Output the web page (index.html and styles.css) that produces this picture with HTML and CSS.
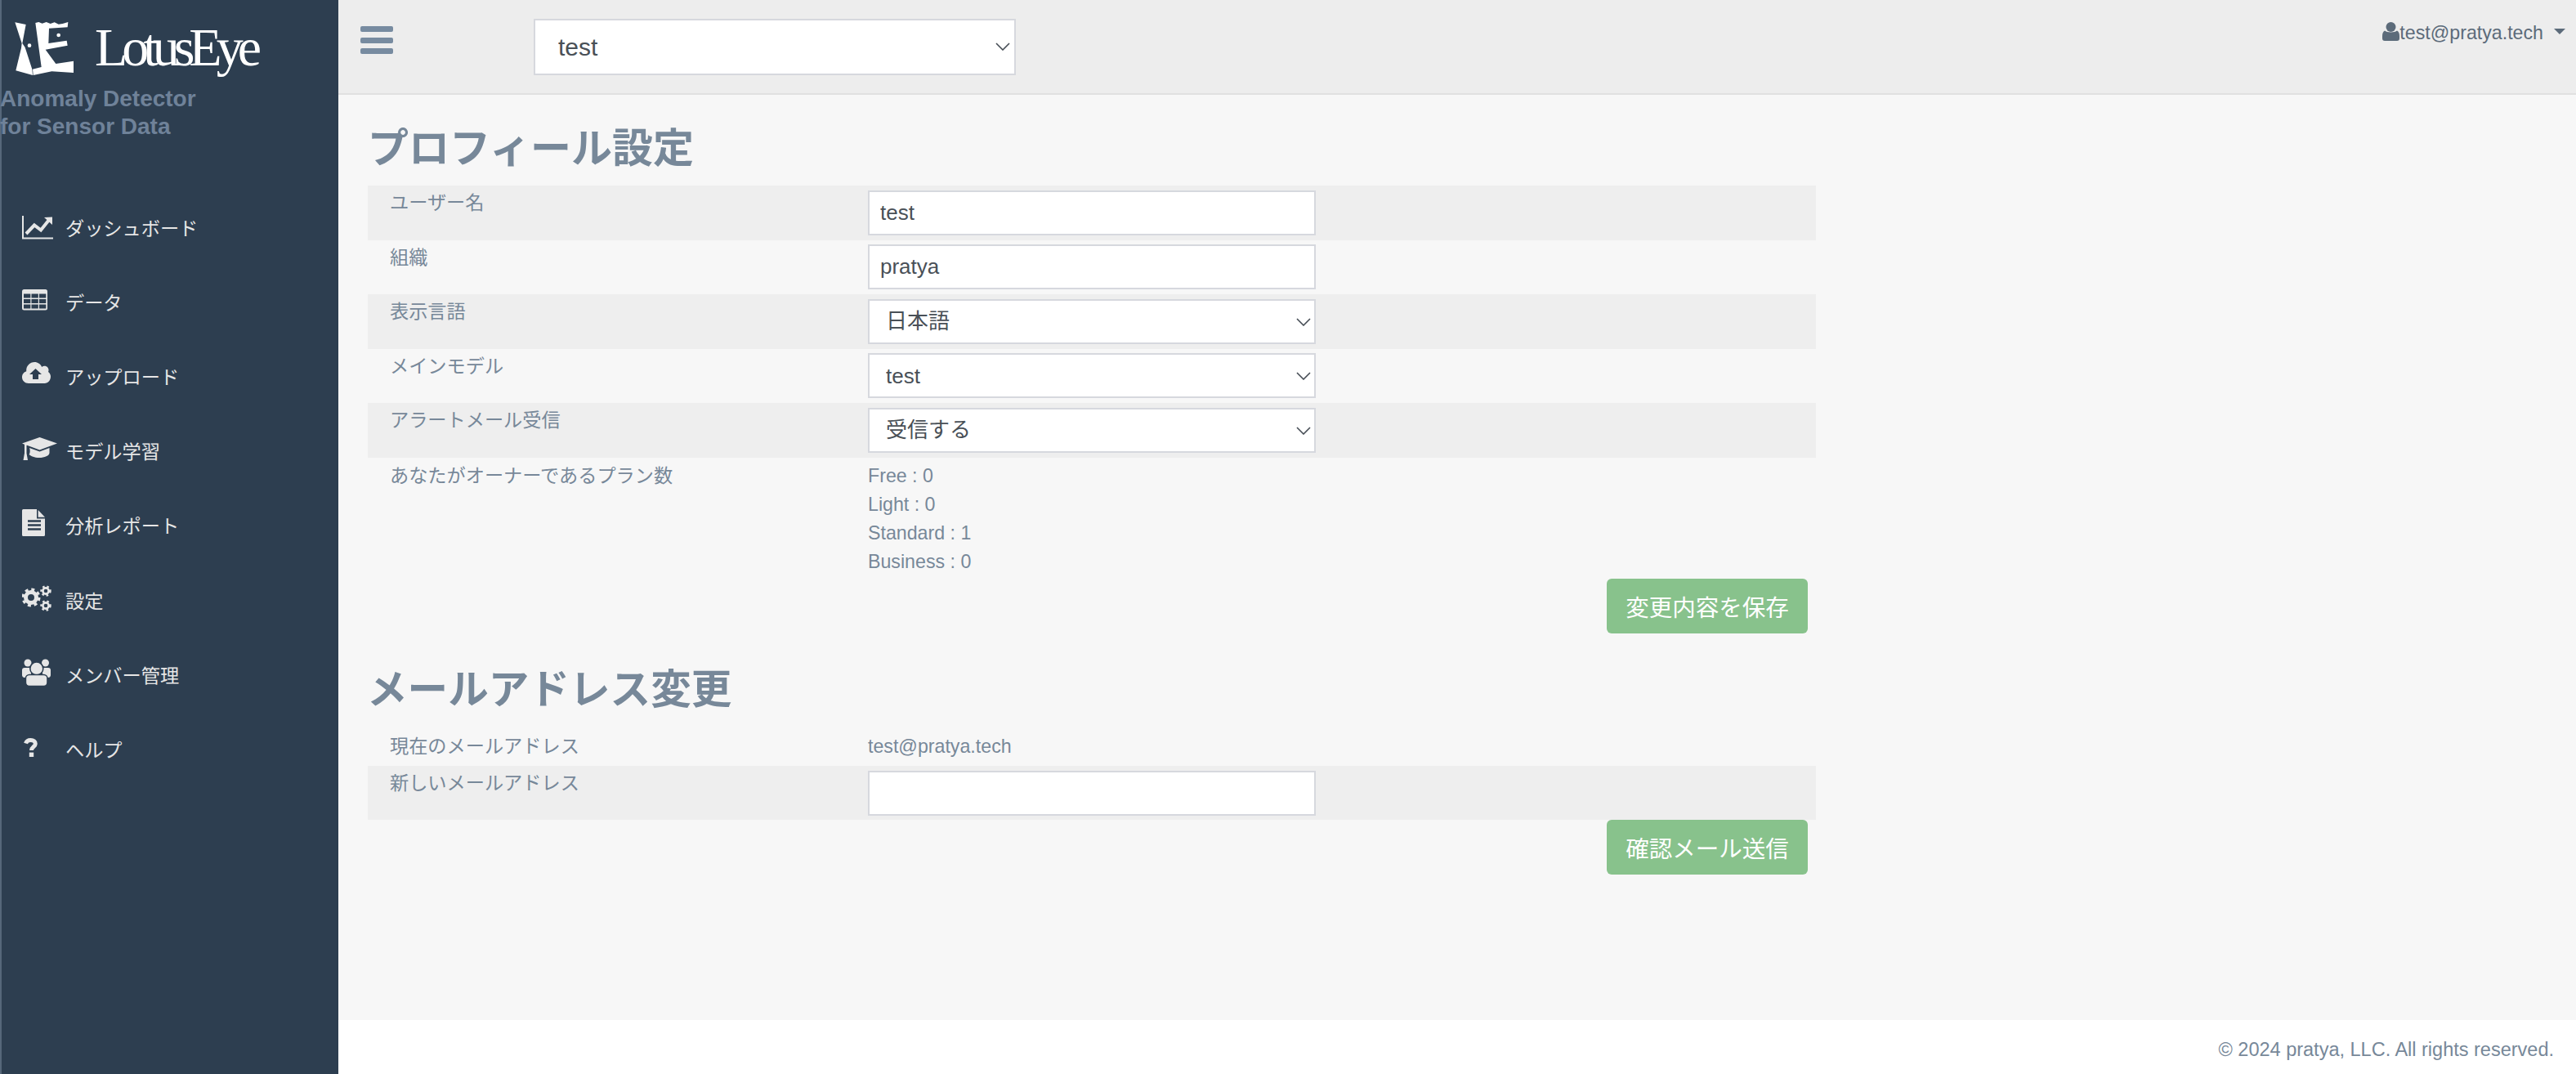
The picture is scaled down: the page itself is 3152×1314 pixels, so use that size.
FILE: index.html

```html
<!DOCTYPE html>
<html lang="ja">
<head>
  <meta charset="UTF-8" />
  <title>LotusEye</title>
  <link rel="stylesheet" href="styles.css">
</head>
<body>
  <aside class="sidebar">
    <div class="brand">
      <svg class="brand-mark" viewBox="0 0 270 240">
        <path fill="#fff" d="M25 28L65 36L52 105L62 120L88 200L90 222L28 205L48 122L50 105Z"/>
        <path fill="#fff" d="M100 30L112 27L125 32L140 27L155 33L170 28L185 35L200 33L220 27L218 46L150 50L148 105L215 95L218 113L137 128L175 180L240 170L240 213L160 208L92 222L90 200L122 192Z"/>
        <circle fill="#fff" cx="78" cy="113" r="7"/>
        <circle fill="#fff" cx="185" cy="75" r="7"/>
      </svg>
      <span class="brand-name">LotusEye</span>
    </div>
    <p class="tagline">Anomaly Detector<br>for Sensor Data</p>
    <nav class="nav">
      <a class="nav-item">
        <svg class="nav-icon" viewBox="0 0 44 40">
          <path d="M1 9V36.5H38" fill="none" stroke="#e6e6e6" stroke-width="2"/>
          <path d="M5 31L15 20.5L23 26.5L33 14" fill="none" stroke="#e6e6e6" stroke-width="4"/>
          <path d="M27 11L37 10.5V20Z" fill="#e6e6e6"/>
        </svg>
        ダッシュボード
      </a>
      <a class="nav-item">
        <svg class="nav-icon" viewBox="0 0 44 40">
          <rect y="8" width="31" height="25.5" rx="2.5" fill="#e6e6e6"/>
          <g fill="#2d3e50">
            <rect x="2" y="13.5" width="8.3" height="5"/><rect x="11.5" y="13.5" width="8.3" height="5"/><rect x="21" y="13.5" width="8.3" height="5"/>
            <rect x="2" y="20" width="8.3" height="5"/><rect x="11.5" y="20" width="8.3" height="5"/><rect x="21" y="20" width="8.3" height="5"/>
            <rect x="2" y="26.5" width="8.3" height="5"/><rect x="11.5" y="26.5" width="8.3" height="5"/><rect x="21" y="26.5" width="8.3" height="5"/>
          </g>
        </svg>
        データ
      </a>
      <a class="nav-item">
        <svg class="nav-icon" viewBox="0 0 44 40">
          <path fill="#e6e6e6" d="M8 32C3.5 32 0 28.6 0 24.5C0 21 2.2 18.2 5.3 17.3C5.2 16.8 5.2 16.3 5.2 16C5.2 10.5 9.7 6 15.2 6C19.2 6 22.7 8.4 24.2 11.9C25.1 11.1 26.2 10.7 27.5 10.7C30.3 10.7 32.5 12.9 32.5 15.7C32.5 16.5 32.3 17.2 32 17.9C33.8 19.1 35 21.2 35 23.5C35 28.3 32 32 27.5 32Z"/>
          <path fill="#2d3e50" d="M16.5 14L24 21H20V27H13V21H9Z"/>
        </svg>
        アップロード
      </a>
      <a class="nav-item">
        <svg class="nav-icon" viewBox="0 0 44 40">
          <path fill="#e6e6e6" d="M21.5 7L43 14.5L21.5 22.5L6 16.8L5.5 17V26.5L7 35H1.5L3 26.5V15.8L0 14.5Z"/>
          <path fill="#e6e6e6" d="M9 20L21.5 24.5L33.5 20V26C33.5 29.5 27.5 32 21 32C15 32 11 30 8.5 28C10 27 10 22 9 20Z"/>
        </svg>
        モデル学習
      </a>
      <a class="nav-item">
        <svg class="nav-icon" viewBox="0 0 44 40">
          <path fill="#e6e6e6" d="M1.5 4H18V15.5H28V35.5A1.5 1.5 0 0 1 26.5 37H1.5A1.5 1.5 0 0 1 0 35.5V5.5A1.5 1.5 0 0 1 1.5 4Z"/>
          <path fill="#e6e6e6" d="M19.6 5L28 13.8H19.6Z"/>
          <path d="M7 18.5H23M7 23.5H23M7 28.5H23" fill="none" stroke="#2d3e50" stroke-width="2.4"/>
        </svg>
        分析レポート
      </a>
      <a class="nav-item">
        <svg class="nav-icon" viewBox="0 0 44 40">
          <g fill="none" stroke="#e6e6e6">
            <circle cx="11" cy="20" r="6.5" stroke-width="5"/>
            <circle cx="11" cy="20" r="9.5" stroke-width="4" stroke-dasharray="3.8 3.66"/>
            <circle cx="29" cy="12" r="3.6" stroke-width="2.6"/>
            <circle cx="29" cy="12" r="5.4" stroke-width="2.6" stroke-dasharray="2.4 2.84"/>
            <circle cx="29" cy="30" r="3.6" stroke-width="2.6"/>
            <circle cx="29" cy="30" r="5.4" stroke-width="2.6" stroke-dasharray="2.4 2.84"/>
          </g>
        </svg>
        設定
      </a>
      <a class="nav-item">
        <svg class="nav-icon" viewBox="0 0 44 40">
          <g fill="#e6e6e6">
            <circle cx="7" cy="9" r="4.5"/>
            <circle cx="28.5" cy="9" r="4.5"/>
            <path d="M3 15H11V27H3C1 27 0 25.5 0 24V18C0 16 1 15 3 15Z"/>
            <path d="M25 15H32C34 15 35 16 35 18V24C35 25.5 34 27 32 27H25Z"/>
            <circle cx="17.8" cy="16" r="8" stroke="#2d3e50" stroke-width="1.6"/>
            <path d="M9 23.5H26.5C29 23.5 31 25.5 31 28V33C31 35.5 29 37.5 26.5 37.5H9C6.5 37.5 4.4 35.5 4.4 33V28C4.4 25.5 6.5 23.5 9 23.5Z" stroke="#2d3e50" stroke-width="1.6"/>
          </g>
        </svg>
        メンバー管理
      </a>
      <a class="nav-item">
        <svg class="nav-icon" viewBox="0 0 44 40">
          <path d="M4.5 16.5C5.5 13.5 7.5 12.5 10.5 12.5C14 12.5 16.3 14.3 16.3 17C16.3 20.5 11.5 21 11.5 25" fill="none" stroke="#e6e6e6" stroke-width="5"/>
          <rect x="8.8" y="27.6" width="5.4" height="5.4" fill="#e6e6e6"/>
        </svg>
        ヘルプ
      </a>
    </nav>
  </aside>

  <div class="main">
    <header class="topbar">
      <div class="burger"><span></span><span></span><span></span></div>
      <div class="select-wrap team-select">
        <select><option>test</option></select>
        <svg class="chevron" viewBox="0 0 18 10"><path d="M1 1L9 9L17 1" fill="none" stroke="#454c54" stroke-width="1.6"/></svg>
      </div>
      <div class="user-menu">
        <svg class="user-icon" viewBox="0 0 21 23">
          <circle cx="10.5" cy="6" r="6" fill="#5c6b7a"/>
          <path d="M3 10.5C5 13 16 13 18 10.5C20 11.5 21 14 21 17V20C21 22 20 23 18 23H3C1 23 0 22 0 20V17C0 14 1 11.5 3 10.5Z" fill="#5c6b7a"/>
        </svg>
        <span>test@pratya.tech</span>
        <i class="caret"></i>
      </div>
    </header>

    <main class="content">
      <h2 class="title">プロフィール設定</h2>
      <div class="row shaded">
        <label>ユーザー名</label>
        <input type="text" value="test">
      </div>
      <div class="row">
        <label>組織</label>
        <input type="text" value="pratya">
      </div>
      <div class="row shaded">
        <label>表示言語</label>
        <div class="select-wrap">
          <select><option>日本語</option></select>
          <svg class="chevron" viewBox="0 0 18 10"><path d="M1 1L9 9L17 1" fill="none" stroke="#454c54" stroke-width="1.6"/></svg>
        </div>
      </div>
      <div class="row">
        <label>メインモデル</label>
        <div class="select-wrap">
          <select><option>test</option></select>
          <svg class="chevron" viewBox="0 0 18 10"><path d="M1 1L9 9L17 1" fill="none" stroke="#454c54" stroke-width="1.6"/></svg>
        </div>
      </div>
      <div class="row shaded">
        <label>アラートメール受信</label>
        <div class="select-wrap">
          <select><option>受信する</option></select>
          <svg class="chevron" viewBox="0 0 18 10"><path d="M1 1L9 9L17 1" fill="none" stroke="#454c54" stroke-width="1.6"/></svg>
        </div>
      </div>
      <div class="row plans">
        <label>あなたがオーナーであるプラン数</label>
        <div>
          <div>Free : 0</div>
          <div>Light : 0</div>
          <div>Standard : 1</div>
          <div>Business : 0</div>
        </div>
      </div>
      <div class="actions"><button class="btn">変更内容を保存</button></div>

      <h2 class="title second">メールアドレス変更</h2>
      <div class="row static">
        <label>現在のメールアドレス</label>
        <div>test@pratya.tech</div>
      </div>
      <div class="row shaded last">
        <label>新しいメールアドレス</label>
        <input type="text">
      </div>
      <div class="actions"><button class="btn">確認メール送信</button></div>
    </main>

    <footer class="footer">© 2024 pratya, LLC. All rights reserved.</footer>
  </div>
</body>
</html>
```

FILE: styles.css

```css
* {
  box-sizing: border-box;
}
html, body {
  height: 100%;
}
body {
  margin: 0;
  display: flex;
  min-height: 1314px;
  font-family: 'Liberation Sans', 'Noto Sans CJK JP', sans-serif;
  font-size: 23.2px;
  color: #778899;
  background-color: #fff;
  overflow: hidden;
}

/* sidebar */
.sidebar {
  width: 414px;
  flex: none;
  background-color: #2d3e50;
  border-left: 2px solid #56677a;
}
.brand {
  display: flex;
  padding-top: 18px;
  padding-left: 8px;
  height: 98px;
}
.brand-mark {
  width: 90px;
  height: 80px;
  flex: none;
}
.brand-name {
  margin: 4px 0 0 16px;
  font-family: 'Liberation Serif', serif;
  font-size: 66px;
  line-height: 72px;
  letter-spacing: -7px;
  color: #fff;
}
.tagline {
  margin: 6px 0 60px -2px;
  font-size: 28px;
  font-weight: bold;
  line-height: 34px;
  color: #6f8299;
}
.nav-item {
  display: flex;
  align-items: center;
  height: 91.2px;
  padding-left: 25px;
  color: #e6e6e6;
}
.nav-icon {
  width: 44px;
  height: 40px;
  margin-top: -6px;
  margin-right: 9px;
  flex: none;
}

/* top bar */
.main {
  flex: 1;
  display: flex;
  flex-direction: column;
  min-width: 0;
}
.topbar {
  height: 116px;
  flex: none;
  display: flex;
  align-items: flex-start;
  background-color: #ededed;
  border-bottom: 2px solid #e0e0e0;
}
.burger {
  width: 40px;
  margin: 32px 0 0 27px;
}
.burger span {
  display: block;
  height: 7px;
  margin-bottom: 6.5px;
  border-radius: 2px;
  background-color: #778ba0;
}
.team-select {
  width: 590px;
  height: 69px;
  margin: 23px 0 0 172px;
}
.team-select select {
  height: 100%;
  font-size: 30px;
  padding-left: 28px;
}
.team-select .chevron {
  right: 7px;
  top: 29px;
}
.user-menu {
  margin: 27px 13px 0 auto;
  display: flex;
  align-items: flex-start;
  color: #5c6b7a;
}
.user-icon {
  width: 21px;
  height: 23px;
}
.user-menu span {
  line-height: 26px;
}
.caret {
  width: 0;
  height: 0;
  margin: 8px 0 0 13px;
  border-top: 7px solid #5c6b7a;
  border-left: 7px solid transparent;
  border-right: 7px solid transparent;
}

/* form */
.content {
  flex: 1;
  padding: 36px 0 0 36px;
  background-color: #f7f7f7;
}
.title {
  width: 1772px;
  margin: 0 0 15px;
  font-size: 50px;
  line-height: 60px;
  font-weight: bold;
}
.title.second {
  margin: 39px 0 16px -1px;
  font-size: 49.6px;
}
.row {
  width: 1772px;
  height: 66.6px;
  padding-top: 5.6px;
  display: grid;
  grid-template-columns: 612px 548px;
  line-height: 35px;
}
.row label {
  padding-left: 27px;
  margin-top: -1.5px;
}
.shaded {
  background-color: #eee;
}
.plans {
  height: 148px;
  padding-top: 5px;
}
.plans label {
  margin-top: 0;
}
.static {
  height: 47px;
}
.static label {
  margin-top: 0;
}
.last {
  height: 66px;
}
input, select {
  width: 100%;
  height: 55px;
  margin: 0;
  border: 2px solid #d6d8de;
  border-radius: 0;
  background-color: #fff;
  font-family: inherit;
  font-size: 26px;
  color: #495057;
  outline: none;
}
input {
  padding: 0 13px;
}
select {
  appearance: none;
  padding: 0 20px;
}
.select-wrap {
  position: relative;
}
.chevron {
  position: absolute;
  right: 6px;
  top: 23px;
  width: 18px;
  height: 10px;
  pointer-events: none;
}
.actions {
  width: 1772px;
  display: flex;
  justify-content: flex-end;
  padding-right: 10px;
}
.btn {
  width: 246px;
  height: 67px;
  padding: 0;
  border: none;
  border-radius: 6px;
  background-color: #88c28c;
  font-family: inherit;
  font-size: 28.5px;
  color: #fff;
}

.footer {
  height: 66px;
  flex: none;
  padding: 18px 27px 0 0;
  text-align: right;
  font-size: 23.5px;
  line-height: 36px;
}
```
